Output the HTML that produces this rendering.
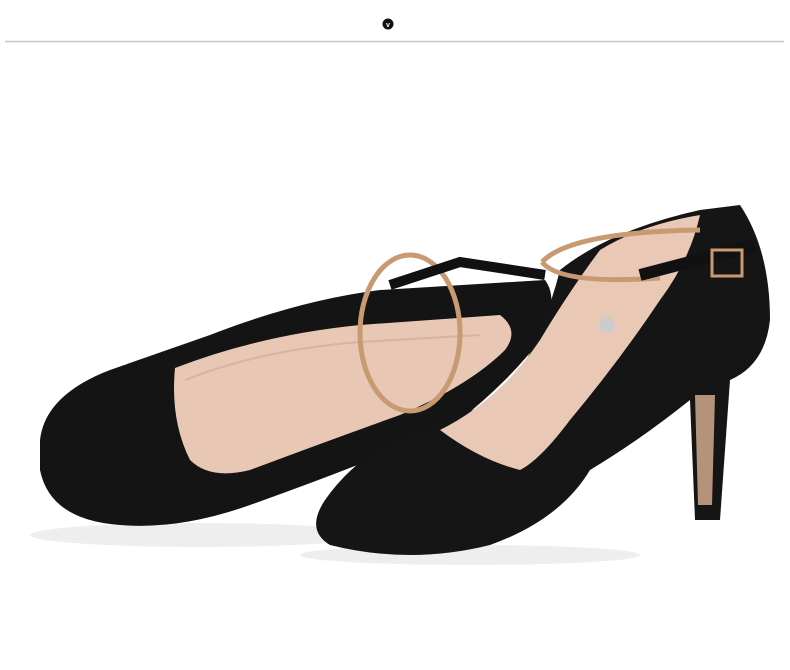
<!DOCTYPE html>
<html><head><style>
html,body{margin:0;padding:0;background:#fff;width:790px;height:670px;overflow:hidden}
</style></head><body>
<svg width="790" height="670" viewBox="0 0 790 670" xmlns="http://www.w3.org/2000/svg">
<rect width="790" height="670" fill="#fff"/>
<line x1="5" y1="41.5" x2="784" y2="41.5" stroke="#c8c8c8" stroke-width="1.5"/>
<circle cx="388" cy="24" r="5.5" fill="#111"/>
<text x="388" y="27" font-family="Liberation Sans, sans-serif" font-size="7" font-weight="bold" fill="#fff" text-anchor="middle">v</text>
<!-- shadows -->
<ellipse cx="200" cy="535" rx="170" ry="12" fill="#eee"/>
<ellipse cx="470" cy="555" rx="170" ry="10" fill="#eee"/>
<!-- left shoe -->
<path d="M40 440 Q45 395 110 370 L210 335 Q300 300 380 290 L545 280 Q560 300 540 340 Q510 380 460 420 Q420 440 370 460 Q320 480 250 505 Q180 530 120 525 Q50 520 40 470 Z" fill="#141414"/>
<path d="M175 368 Q260 335 360 325 L500 315 Q520 330 505 350 Q470 385 400 415 Q330 440 250 470 Q210 480 190 460 Q170 420 175 368 Z" fill="#e8c7b4"/>
<path d="M185 380 Q260 350 360 342 L480 335" stroke="#d8b39e" stroke-width="2" fill="none"/>
<ellipse cx="410" cy="333" rx="50" ry="78" fill="none" stroke="#c79a72" stroke-width="5"/>
<path d="M390 285 L460 262 L545 275" stroke="#111" stroke-width="10" fill="none"/>
<!-- right shoe -->
<path d="M560 270 Q610 230 700 210 L740 205 Q770 250 770 320 Q765 365 730 380 L720 520 L695 520 L690 400 Q640 440 590 470 Q560 520 490 545 Q410 565 330 545 Q305 530 325 500 Q360 450 420 430 Q470 415 510 390 Q545 330 560 270 Z" fill="#151515"/>
<path d="M695 395 L715 395 L712 505 L698 505 Z" fill="#b5937a"/>
<path d="M440 430 Q500 400 540 340 Q570 290 600 250 Q640 225 700 215 Q690 260 660 300 Q620 360 570 420 Q540 460 520 470 Q480 460 440 430 Z" fill="#e9c8b5"/>
<path d="M542 262 Q570 232 700 230" stroke="#c79a72" stroke-width="5" fill="none"/>
<path d="M542 262 Q560 285 660 278" stroke="#c79a72" stroke-width="5" fill="none"/>
<path d="M640 275 L755 245" stroke="#111" stroke-width="12" fill="none"/>
<rect x="712" y="250" width="30" height="26" fill="none" stroke="#c79a72" stroke-width="3"/>
<circle cx="607" cy="325" r="8" fill="#ccc"/>
</svg>
</body></html>
